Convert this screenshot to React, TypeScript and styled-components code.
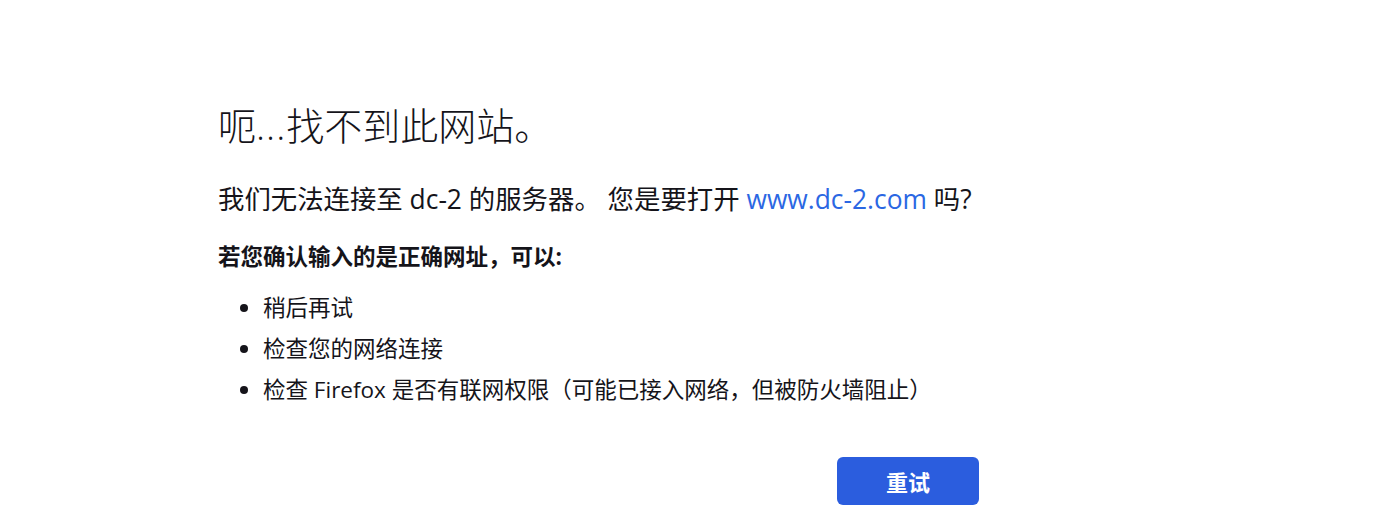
import React from "react";
import styled, { createGlobalStyle } from "styled-components";

const GlobalStyle = createGlobalStyle`
  html, body {
    margin: 0;
    padding: 0;
    background: #ffffff;
  }
  body {
    font-family: "Open Sans", "Noto Sans CJK SC", sans-serif;
    color: #15141a;
  }
`;

const Page = styled.main`
  padding: 103px 0 0 218px;
  box-sizing: border-box;
  min-height: 530px;
`;

const Container = styled.div`
  width: 761px;
  display: flex;
  flex-direction: column;
`;

const Title = styled.h1`
  margin: 0;
  font-size: 38px;
  line-height: 44px;
  font-weight: 300;
  font-family: "Open Sans", "Noto Sans CJK SC", sans-serif;
`;

const Dots = styled.span`
  letter-spacing: 1px;
`;

const ShortDesc = styled.p`
  margin: 36px 0 0;
  font-size: 26.4px;
  line-height: 32px;
  font-weight: 400;
  white-space: nowrap;
`;

const Link = styled.a`
  color: #2b67e3;
  text-decoration: none;
`;

const Prompt = styled.p`
  margin: 27px 0 0;
  font-size: 22.5px;
  line-height: 30px;
  font-weight: 700;
`;

const List = styled.ul`
  margin: 14.5px 0 0;
  padding-left: 45px;
  font-size: 22.5px;
  line-height: 41px;
`;

const Item = styled.li``;

const Actions = styled.div`
  display: flex;
  justify-content: flex-end;
  margin-top: 47.5px;
`;

const Button = styled.button`
  width: 142px;
  height: 48px;
  border: none;
  border-radius: 6px;
  background: #2b5dde;
  color: #ffffff;
  font-family: "Noto Sans CJK SC", sans-serif;
  font-size: 22px;
  font-weight: 700;
  cursor: pointer;
`;

export default function App() {
  return (
    <>
      <GlobalStyle />
      <Page>
        <Container>
          <Title>
            呃<Dots>...</Dots>找不到此网站。
          </Title>
          <ShortDesc>
            我们无法连接至 dc-2 的服务器。 您是要打开{" "}
            <Link href="#">www.dc-2.com</Link> 吗?
          </ShortDesc>
          <Prompt>若您确认输入的是正确网址，可以:</Prompt>
          <List>
            <Item>稍后再试</Item>
            <Item>检查您的网络连接</Item>
            <Item>检查 Firefox 是否有联网权限（可能已接入网络，但被防火墙阻止）</Item>
          </List>
          <Actions>
            <Button>重试</Button>
          </Actions>
        </Container>
      </Page>
    </>
  );
}
